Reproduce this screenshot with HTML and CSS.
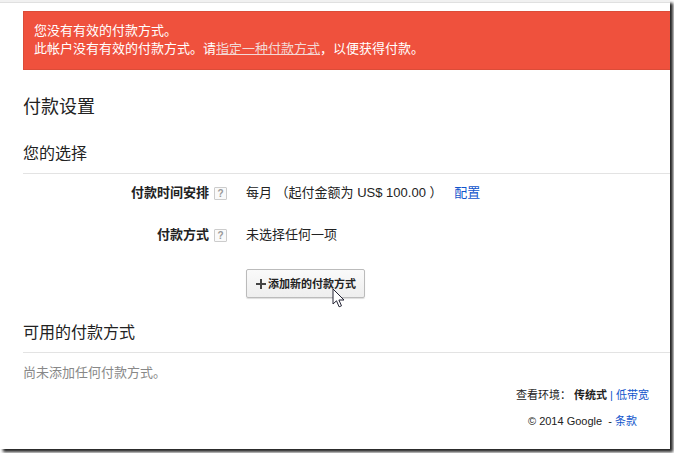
FILE: index.html
```html
<!DOCTYPE html>
<html lang="zh-CN">

<head>
    <meta charset="UTF-8">
    <meta name="viewport" content="width=device-width, initial-scale=1.0">
    <title>付款设置</title>
    <link rel="stylesheet" href="styles.css">
</head>

<body>
    <div class="window">
        <main class="content">
            <div class="alert">
                <p>您没有有效的付款方式。</p>
                <p>此帐户没有有效的付款方式。请<a href="#add">指定一种付款方式</a>，以便获得付款。</p>
            </div>

            <h1>付款设置</h1>

            <h2>您的选择</h2>
            <dl class="settings">
                <dt>付款时间安排 <button type="button" class="help">?</button></dt>
                <dd>每月 （起付金额为 US$ 100.00 ） <a href="#schedule" class="configure">配置</a></dd>
                <dt>付款方式 <button type="button" class="help">?</button></dt>
                <dd>未选择任何一项</dd>
            </dl>
            <div class="actions">
                <button type="button" class="add-button" id="add">
                    <svg width="10" height="10" viewBox="0 0 10 10"><path d="M4 0h2v4h4v2H6v4H4V6H0V4h4z" fill="#444"/></svg>
                    <span>添加新的付款方式</span>
                    <svg class="cursor" width="13" height="21" viewBox="0 0 13 21"><path d="M1 1v15l3.500-3.200 2.600 6 2.400-1-2.600-5.800H12z" fill="#fff" stroke="#223" stroke-width="1"/></svg>
                </button>
            </div>

            <h2>可用的付款方式</h2>
            <p class="empty">尚未添加任何付款方式。</p>
        </main>

        <footer class="footer">
            <p>查看环境： <strong>传统式</strong> <span class="divider">|</span> <a href="#low">低带宽</a></p>
            <p>© 2014 Google &nbsp;- <a href="#terms">条款</a></p>
        </footer>
    </div>
</body>

</html>
```

FILE: styles.css
```css
* {
    box-sizing: border-box;
}

body {
    margin: 0;
    padding: 0 4px 4px 0;
    min-height: 100vh;
    display: flex;
    background: #fff;
    color: #222;
    font: 13px/18px "Liberation Sans", "Noto Sans CJK SC", sans-serif;
}

h1,
h2,
p,
dl,
dd {
    margin: 0;
}

a {
    color: #15c;
    text-decoration: none;
}

.window {
    flex: 1;
    border-top: 2px solid #f1f1f1;
    box-shadow: 3px 3px 3px #222;
    background: #fff;
}

.content {
    border-top: 1px solid #e0e0e0;
    padding: 8px 0 0 23px;
}

.alert {
    padding: 10px 10px 11px;
    border: 1px solid #db4c38;
    border-right: 0;
    background: #ef513d;
    color: #fff;
}

.alert a {
    color: #f3d9d6;
    text-decoration: underline;
}

h1 {
    margin: 24px 0;
    font-size: 18px;
    font-weight: normal;
    line-height: 26px;
}

h2 {
    padding-bottom: 9px;
    border-bottom: 1px solid #e3e3e3;
    font-size: 16px;
    font-weight: normal;
    line-height: 20px;
}

.settings {
    display: grid;
    grid-template-columns: 204px 1fr;
    gap: 24px 19px;
    padding-top: 10px;
}

.settings dt {
    display: flex;
    justify-content: flex-end;
    align-items: center;
    gap: 5px;
    font-weight: bold;
}

.help {
    width: 13px;
    height: 13px;
    padding: 0;
    border: 1px solid #ccc;
    border-radius: 1px;
    background: #fafafa;
    color: #999;
    font: bold 10px/11px "Liberation Sans", sans-serif;
}

.configure {
    margin-left: 8px;
}

.actions {
    padding: 25px 0 25px 223px;
}

.add-button {
    position: relative;
    display: flex;
    align-items: center;
    gap: 2px;
    height: 29px;
    padding: 0 8px 0 9px;
    border: 1px solid #bbb;
    border-radius: 2px;
    background: linear-gradient(#fafafa, #eee);
    box-shadow: 0 1px 1px #ddd;
    color: #222;
    font: bold 11px/16px "Liberation Sans", "Noto Sans CJK SC", sans-serif;
}

.cursor {
    position: absolute;
    left: 85px;
    top: 18px;
}

.empty {
    padding-top: 11px;
    color: #888;
}

.footer {
    width: fit-content;
    margin: 3px 21px 0 auto;
    text-align: center;
    font-size: 11px;
    line-height: 20px;
}

.footer p {
    margin-bottom: 6px;
}

.divider {
    color: #15c;
}
```
